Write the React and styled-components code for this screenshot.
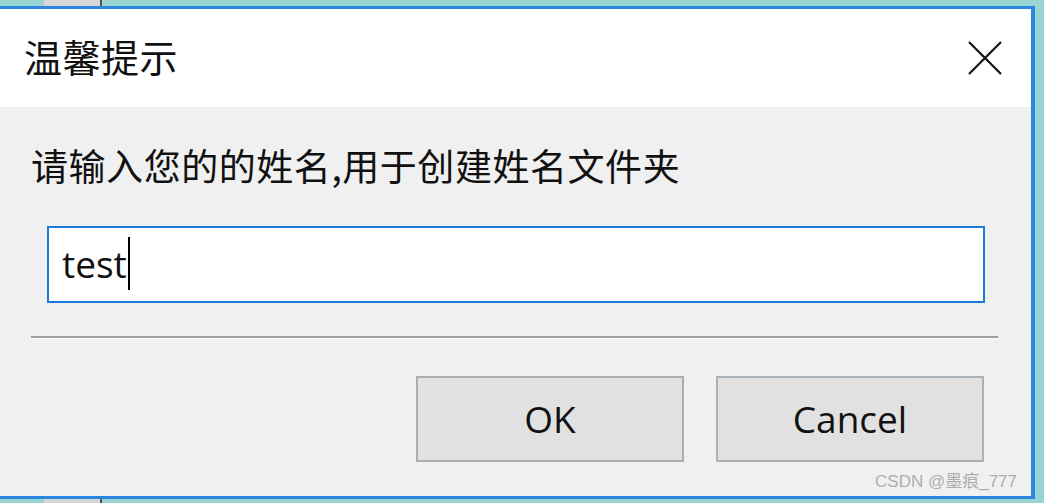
import React from 'react';
import styled, { createGlobalStyle } from 'styled-components';

const GlobalStyle = createGlobalStyle`
  html, body {
    margin: 0;
    padding: 0;
    background: #98d4d1;
    overflow: hidden;
  }
  body {
    font-family: "Open Sans", "Noto Sans CJK SC", sans-serif;
  }
`;

const App = () => {
  return (
    <>
      <GlobalStyle />
      <Desktop>
        <Strip height={9}>
          <Thumb />
        </Strip>
        <Row>
          <Dialog>
            <TitleBar>
              <Title>温馨提示</Title>
              <CloseButton>
                <svg width="34" height="34" viewBox="0 0 34 34">
                  <path d="M1 1 L33 33 M33 1 L1 33" stroke="#111" strokeWidth="2.2" fill="none" />
                </svg>
              </CloseButton>
            </TitleBar>
            <Body>
              <Prompt>请输入您的的姓名,用于创建姓名文件夹</Prompt>
              <InputBox>
                <InputText>test</InputText>
                <Caret />
              </InputBox>
              <Separator />
              <ButtonRow>
                <Button>OK</Button>
                <Button $tone="blue">Cancel</Button>
              </ButtonRow>
            </Body>
            <Watermark>CSDN @墨痕_777</Watermark>
          </Dialog>
          <Edge />
        </Row>
        <Strip height={5}>
          <Thumb />
        </Strip>
      </Desktop>
    </>
  );
};

const Desktop = styled.div`
  width: 1044px;
  height: 503px;
  display: flex;
  flex-direction: column;
  background: #98d4d1;
`;

const Strip = styled.div`
  height: ${(p) => p.height}px;
  display: flex;
  padding-left: 44px;
`;

const Thumb = styled.div`
  width: 56px;
  height: 100%;
  background: #d6d6d6;
  border-right: 2px solid #555;
`;

const Row = styled.div`
  display: flex;
`;

const Edge = styled.div`
  flex: 1;
  background: #98d4d1;
`;

const Dialog = styled.div`
  position: relative;
  flex: 0 0 1035px;
  box-sizing: border-box;
  border-top: 3px solid #2a86df;
  border-bottom: 3px solid #2a86df;
  border-right: 4px solid #2a86df;
  display: flex;
  flex-direction: column;
`;

const TitleBar = styled.div`
  height: 94px;
  background: #ffffff;
  display: flex;
  align-items: center;
  justify-content: space-between;
  padding: 0 29px 4px 24px;
`;

const Title = styled.div`
  font-family: "Noto Sans CJK SC", sans-serif;
  font-size: 38px;
  letter-spacing: 0.5px;
  color: #111;
  line-height: 44px;
`;

const CloseButton = styled.div`
  width: 34px;
  height: 34px;
  display: flex;
  margin-top: 4px;
`;

const Body = styled.div`
  background: #f0f0f0;
  display: flex;
  flex-direction: column;
  padding: 36px 33px 34px 31px;
`;

const Prompt = styled.div`
  font-family: "Noto Sans CJK SC", sans-serif;
  font-size: 37px;
  letter-spacing: 0.55px;
  line-height: 44px;
  color: #111;
`;

const InputBox = styled.div`
  margin: 39px 13px 0 16px;
  height: 77px;
  box-sizing: border-box;
  border: 2px solid #1c7ad8;
  background: #fff;
  display: flex;
  align-items: center;
  padding-left: 13px;
`;

const InputText = styled.span`
  font-size: 37px;
  color: #111;
  line-height: 1;
  margin-top: -3px;
`;

const Caret = styled.span`
  width: 2px;
  height: 53px;
  background: #000;
  margin-left: 1px;
  margin-top: -2px;
`;

const Separator = styled.div`
  margin-top: 33px;
  height: 2px;
  background: #a0a0a0;
  border-bottom: 1px solid #ffffff;
`;

const ButtonRow = styled.div`
  margin-top: 37px;
  display: flex;
  justify-content: flex-end;
  gap: 32px;
  padding-right: 14px;
`;

const Button = styled.div`
  width: 268px;
  height: 86px;
  box-sizing: border-box;
  border: 2px solid ${(p) => (p.$tone === 'blue' ? '#a9b1b9' : '#adadad')};
  background: #e1e1e1;
  display: flex;
  align-items: center;
  justify-content: center;
  font-size: 37px;
  color: #111;
  padding-bottom: 2px;
`;

const Watermark = styled.div`
  position: absolute;
  right: 14px;
  bottom: 4px;
  font-family: "Liberation Sans", "Noto Sans CJK SC", sans-serif;
  font-size: 17px;
  color: rgba(150, 150, 150, 0.75);
  white-space: nowrap;
`;

export default App;
